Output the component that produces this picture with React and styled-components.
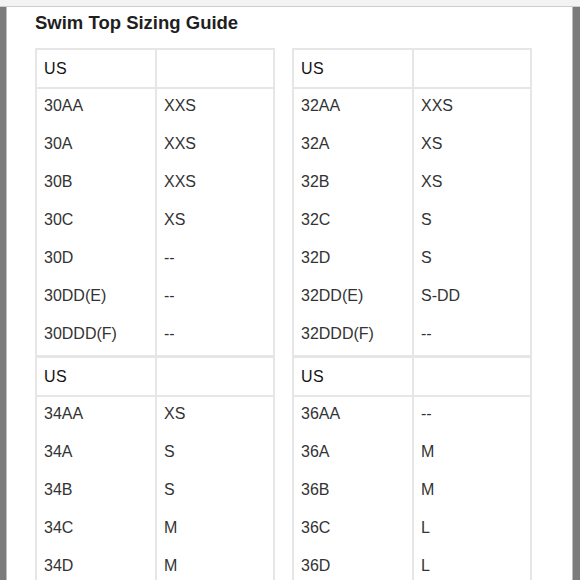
import styled, { createGlobalStyle } from "styled-components";

const GlobalStyle = createGlobalStyle`
  html, body {
    margin: 0;
    padding: 0;
    background: #ffffff;
  }
  body {
    font-family: "Liberation Sans", Arial, sans-serif;
  }
`;

const Frame = styled.div`
  width: 580px;
  height: 580px;
  display: flex;
  flex-direction: column;
  overflow: hidden;
`;

const TopBar = styled.div`
  height: 6px;
  flex-shrink: 0;
  background: #f3f3f3;
  border-bottom: 1px solid #cdcdcd;
`;

const Body = styled.div`
  flex: 1;
  display: flex;
  min-height: 0;
`;

const Rail = styled.div`
  width: ${(p) => p.$width}px;
  flex-shrink: 0;
  background: #7c7c7c;
  ${(p) => (p.$side === "left" ? "border-right" : "border-left")}: 1px solid #bdbdbd;
`;

const Content = styled.div`
  flex: 1;
  min-height: 0;
  padding: 5px 0 0 28px;
`;

const Title = styled.h1`
  margin: 0 0 14px 0;
  font-size: 18.5px;
  line-height: 22px;
  font-weight: 700;
  color: #1f1f1f;
`;

const Grid = styled.div`
  display: grid;
  grid-template-columns: 240px 240px;
  column-gap: 17px;
`;

const SizeTable = styled.div`
  border: 2px solid #e6e6e6;
  margin-top: ${(p) => (p.$lower ? -1 : 0)}px;
  display: grid;
  grid-template-columns: 118px 1fr;
`;

const Cell = styled.div`
  box-sizing: border-box;
  height: ${(p) => (p.$head ? 39 : 38)}px;
  display: flex;
  align-items: center;
  padding: 0 0 ${(p) => (p.$head ? 0 : 5)}px 7px;
  font-size: 16px;
  color: ${(p) => (p.$head ? "#141414" : "#333333")};
  font-weight: ${(p) => (p.$head ? 500 : 400)};
  letter-spacing: ${(p) => (p.$head ? "0.5px" : "0")};
  border-left: ${(p) => (p.$divider ? "2px solid #e6e6e6" : "none")};
  border-bottom: ${(p) => (p.$head ? "2px solid #e6e6e6" : "none")};
`;

const tables = [
  [
    ["30AA", "XXS"],
    ["30A", "XXS"],
    ["30B", "XXS"],
    ["30C", "XS"],
    ["30D", "--"],
    ["30DD(E)", "--"],
    ["30DDD(F)", "--"],
  ],
  [
    ["32AA", "XXS"],
    ["32A", "XS"],
    ["32B", "XS"],
    ["32C", "S"],
    ["32D", "S"],
    ["32DD(E)", "S-DD"],
    ["32DDD(F)", "--"],
  ],
  [
    ["34AA", "XS"],
    ["34A", "S"],
    ["34B", "S"],
    ["34C", "M"],
    ["34D", "M"],
  ],
  [
    ["36AA", "--"],
    ["36A", "M"],
    ["36B", "M"],
    ["36C", "L"],
    ["36D", "L"],
  ],
];

const Table = ({ rows, lower }) => (
  <SizeTable $lower={lower}>
    <Cell $head>US</Cell>
    <Cell $head $divider></Cell>
    {rows.map(([band, size]) => [
      <Cell key={band}>{band}</Cell>,
      <Cell key={band + "-s"} $divider>
        {size}
      </Cell>,
    ])}
  </SizeTable>
);

export default function App() {
  return (
    <>
      <GlobalStyle />
      <Frame>
        <TopBar />
        <Body>
          <Rail $side="left" $width={6} />
          <Content>
            <Title>Swim Top Sizing Guide</Title>
            <Grid>
              {tables.map((rows, i) => (
                <Table key={i} rows={rows} lower={i > 1} />
              ))}
            </Grid>
          </Content>
          <Rail $side="right" $width={7} />
        </Body>
      </Frame>
    </>
  );
}
